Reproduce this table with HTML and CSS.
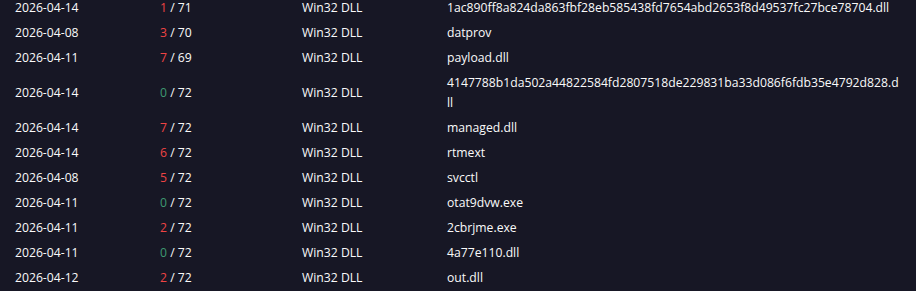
FILE: index.html
```html
<!DOCTYPE html>
<html>
<head>
	<title>Detections</title>
	<meta charset="utf-8">
	<link rel="stylesheet" href="styles.css">
</head>
<body>
	<table class="files">
		<colgroup>
			<col class="c-date">
			<col class="c-ratio">
			<col class="c-type">
			<col>
		</colgroup>
		<tbody>
			<tr><td>2026-04-14</td><td><span class="hit">1</span> / 71</td><td>Win32 DLL</td><td>1ac890ff8a824da863fbf28eb585438fd7654abd2653f8d49537fc27bce78704.dll</td></tr>
			<tr><td>2026-04-08</td><td><span class="hit">3</span> / 70</td><td>Win32 DLL</td><td>datprov</td></tr>
			<tr><td>2026-04-11</td><td><span class="hit">7</span> / 69</td><td>Win32 DLL</td><td>payload.dll</td></tr>
			<tr><td>2026-04-14</td><td><span class="clean">0</span> / 72</td><td>Win32 DLL</td><td>4147788b1da502a44822584fd2807518de229831ba33d086f6fdb35e4792d828.dll</td></tr>
			<tr><td>2026-04-14</td><td><span class="hit">7</span> / 72</td><td>Win32 DLL</td><td>managed.dll</td></tr>
			<tr><td>2026-04-14</td><td><span class="hit">6</span> / 72</td><td>Win32 DLL</td><td>rtmext</td></tr>
			<tr><td>2026-04-08</td><td><span class="hit">5</span> / 72</td><td>Win32 DLL</td><td>svcctl</td></tr>
			<tr><td>2026-04-11</td><td><span class="clean">0</span> / 72</td><td>Win32 DLL</td><td>otat9dvw.exe</td></tr>
			<tr><td>2026-04-11</td><td><span class="hit">2</span> / 72</td><td>Win32 DLL</td><td>2cbrjme.exe</td></tr>
			<tr><td>2026-04-11</td><td><span class="clean">0</span> / 72</td><td>Win32 DLL</td><td>4a77e110.dll</td></tr>
			<tr><td>2026-04-12</td><td><span class="hit">2</span> / 72</td><td>Win32 DLL</td><td>out.dll</td></tr>
		</tbody>
	</table>
</body>
</html>
```

FILE: styles.css
```css
body{
	margin: 0;
	background: #171725;
	color: #fafafa;
	font-family: "Open Sans", "Noto Sans", sans-serif;
	font-size: 12.2px;
	font-weight: 500;
	overflow: hidden;
}
.files{
	width: 916px;
	table-layout: fixed;
	border-collapse: collapse;
	margin-top: -5px;
}
.c-date{ width: 145px; }
.c-ratio{ width: 142px; }
.c-type{ width: 145px; }
.files td{
	padding: 2.5px 15px;
	line-height: 20px;
	vertical-align: middle;
	word-break: break-all;
}
.hit{
	color: #ef4444;
}
.clean{
	color: #3e9a72;
}
```
